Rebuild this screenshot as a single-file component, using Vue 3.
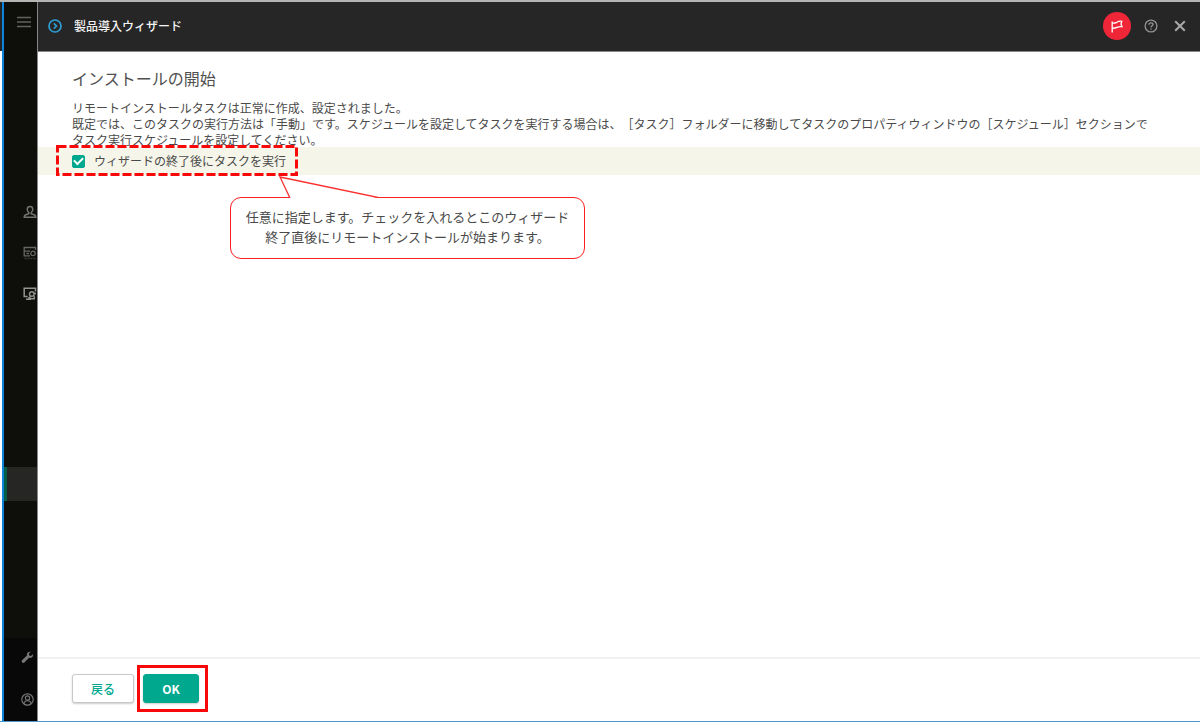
<script setup>
import { ref } from 'vue'

const runTask = ref(true)
</script>

<template>
  <div class="window">
    <nav class="sidebar" aria-label="メインメニュー">
      <button class="nav-btn menu" aria-label="メニュー">
        <svg width="16" height="12" viewBox="0 0 16 12"><path d="M1 1.500h14M1 6h14M1 10.500h14" stroke="#62625f" stroke-width="1.300" /></svg>
      </button>
      <div class="nav-group">
        <button class="nav-btn" aria-label="ユーザー">
          <svg width="14" height="14" viewBox="0 0 14 14" fill="none" stroke="#73736f" stroke-width="1.500"><path d="M7 1.500c-3.600 0-3.300 4.500-1.200 6.200v1L2.300 10Q1.200 10.600 1.200 12.300h11.600Q12.800 10.600 11.700 10L8.200 8.700v-1C10.300 6 10.600 1.500 7 1.500z" /></svg>
        </button>
        <button class="nav-btn" aria-label="サーバー">
          <svg width="14" height="14" viewBox="0 0 14 14" fill="none" stroke="#666662" stroke-width="1.300"><path d="M12.500 4V1.500H1.200v8.300H7M1.200 5.200h6M3.500 7.500h2.500" /><circle cx="10" cy="7.400" r="2.200" /><path d="M1.500 12.500h11" stroke-dasharray="2 1" opacity=".5" /></svg>
        </button>
        <button class="nav-btn" aria-label="デバイス">
          <svg width="14" height="14" viewBox="0 0 14 14" fill="none" stroke="#92928e" stroke-width="1.500"><path d="M12.500 4.500V1.300H1.200v8.100h3.500M3 12.300h5M6 10v2.300" /><circle cx="8.800" cy="7" r="2.300" /><path d="M7 9.200v2.600h4.300V9.200M11 6.500h2" /></svg>
        </button>
      </div>
      <div class="nav-current"></div>
      <div class="nav-bottom">
        <button class="nav-btn" aria-label="設定">
          <svg width="13" height="13" viewBox="0 0 13 13"><path d="M12 3.200 9.900 5 8.200 4.500 7.900 2.800 9.700.8C7.400.2 5.500 2 6 4.500L1 9.300c-1.200 1.400.9 3.600 2.400 2.300L8 6.800C10.600 7.500 12.600 5.500 12 3.200z" fill="#777" /></svg>
        </button>
        <button class="nav-btn" aria-label="アカウント">
          <svg width="13" height="13" viewBox="0 0 13 13" fill="none" stroke="#747474" stroke-width="1.200"><circle cx="6.500" cy="6.500" r="5.700" /><circle cx="6.500" cy="5" r="2.100" /><path d="M3.200 10.700V9.300Q4.500 7.600 6.500 7.600T9.800 9.300v1.400" /></svg>
        </button>
      </div>
    </nav>

    <div class="wizard">
      <header class="titlebar">
        <svg width="14" height="14" viewBox="0 0 14 14" fill="none" stroke="#2f9fd3" stroke-width="1.700"><circle cx="7" cy="7" r="6" /><path d="m5.800 4.300 2.700 2.700-2.700 2.700" /></svg>
        <h1>製品導入ウィザード</h1>
        <div class="actions">
          <button class="flag" aria-label="通知">
            <svg width="14" height="14" viewBox="0 0 14 14" fill="none" stroke="#fff" stroke-width="1.300"><path d="M2.200 13.500V2.500M2.200 4q2.300.4 4.600-.7 2.300-1.400 5-1l-.8 2.700 1 2.700q-2.700-.3-5 .7T2.200 9.200" /></svg>
          </button>
          <button class="help" aria-label="ヘルプ">
            <svg width="14" height="14" viewBox="0 0 14 14" fill="none" stroke="#949494" stroke-width="1.300"><circle cx="7" cy="7" r="5.900" /><path d="M5 5.700C5 3.100 9 3.300 9 5.500 9 6.900 7 6.800 7 8.500M7 9.500v1.300" /></svg>
          </button>
          <button class="close" aria-label="閉じる">
            <svg width="12" height="12" viewBox="0 0 12 12"><path d="m1.200 1.200 9.600 9.600m0-9.600-9.600 9.600" stroke="#a9a9a9" stroke-width="2" /></svg>
          </button>
        </div>
      </header>

      <main class="content">
        <h2>インストールの開始</h2>
        <p class="desc">リモートインストールタスクは正常に作成、設定されました。<br>既定では、このタスクの実行方法は「手動」です。スケジュールを設定してタスクを実行する場合は、［タスク］フォルダーに移動してタスクのプロパティウィンドウの［スケジュール］セクションでタスク実行スケジュールを設定してください。</p>
        <div class="option">
          <label>
            <input v-model="runTask" type="checkbox">
            <span>ウィザードの終了後にタスクを実行</span>
          </label>
          <svg class="mark" width="242" height="31" aria-hidden="true"><rect x="1.500" y="1.500" width="239" height="28" fill="none" stroke="#f80808" stroke-width="3" stroke-dasharray="9 3" /></svg>
          <div class="callout">
            <svg class="tail" width="102" height="22" viewBox="0 0 102 22" aria-hidden="true"><path d="M12 22 2 1l98 21z" fill="#fff" /><path d="M12 22 2 1l98 20.500" fill="none" stroke="#fb3030" stroke-width="1.300" /></svg>
            任意に指定します。チェックを入れるとこのウィザード<br>終了直後にリモートインストールが始まります。
          </div>
        </div>
      </main>

      <footer class="footer">
        <button class="btn">戻る</button>
        <div class="ok-mark"><button class="btn primary">OK</button></div>
      </footer>
    </div>
  </div>
</template>

<style>
body {
  background: #fff;
}
</style>

<style scoped>
* {
  box-sizing: border-box;
}
button {
  border: 0;
  padding: 0;
  background: none;
  font: inherit;
  cursor: pointer;
}
svg {
  display: block;
}
.window {
  display: flex;
  min-height: 100vh;
  padding-left: 2px;
  border-top: 2px solid #b5b5b5;
  border-bottom: 1px solid #4a96d2;
  background: linear-gradient(#252525 49px, #fff 49px);
  font-family: "Noto Sans CJK JP", sans-serif;
  font-size: 12px;
  color: #4a4a4a;
  text-spacing-trim: space-all;
}
.sidebar {
  width: 36px;
  flex: none;
  display: flex;
  flex-direction: column;
  border-left: 2px solid #0d83dc;
  border-right: 1px solid #888;
  background: #0e0e0b;
}
.nav-btn {
  display: flex;
}
.menu {
  margin: 14px 0 0 12px;
}
.nav-group {
  display: flex;
  flex-direction: column;
  gap: 27px;
  margin: 177px 0 0 19px;
}
.nav-current {
  height: 34px;
  margin-top: 166px;
  border-left: 3px solid #045d47;
  background: #262624;
}
.nav-bottom {
  display: flex;
  flex-direction: column;
  gap: 29px;
  margin-top: auto;
  padding: 13px 0 15px 17px;
  background: #080808;
}
.wizard {
  flex: 1;
  min-width: 0;
  display: flex;
  flex-direction: column;
}
.titlebar {
  height: 50px;
  display: flex;
  align-items: center;
  padding: 0 14px 2px 10px;
  border-bottom: 1px solid #888;
  background: #262626;
}
h1 {
  margin: 0 0 0 12px;
  font-size: 12px;
  line-height: 20px;
  font-weight: 500;
  color: #f4f4f4;
}
.actions {
  display: flex;
  align-items: center;
  margin-left: auto;
}
.flag {
  width: 28px;
  height: 28px;
  display: grid;
  place-items: center;
  border-radius: 50%;
  background: #ef2637;
}
.help {
  margin-left: 13px;
}
.close {
  margin-left: 16px;
}
.content {
  flex: 1;
  background: #fff;
}
h2 {
  margin: 14px 34px 0;
  font-size: 16px;
  line-height: 24px;
  font-weight: 400;
  color: #505050;
}
.desc {
  margin: 10px 44px 0 34px;
  line-height: 16px;
}
.option {
  position: relative;
  height: 28px;
  margin-top: -1px;
  padding-left: 34px;
  background: #f5f5e9;
}
label {
  display: inline-flex;
  align-items: center;
  height: 28px;
  gap: 9px;
  line-height: 16px;
}
input {
  appearance: none;
  width: 13px;
  height: 13px;
  margin: 0;
  display: grid;
  place-items: center;
  border: 1px solid #00a88e;
  border-radius: 2px;
  background: #fff;
}
input:checked {
  background: #00a88e;
}
input:checked::before {
  content: "";
  width: 7px;
  height: 4px;
  margin-bottom: 2px;
  border: solid #fff;
  border-width: 0 0 2px 2px;
  transform: rotate(-45deg);
}
.mark {
  position: absolute;
  left: 18px;
  top: -2px;
}
.callout {
  position: absolute;
  left: 192px;
  top: 50px;
  width: 355px;
  padding: 9px 0 11px;
  border: 1px solid #fb2020;
  border-radius: 11px;
  background: #fff;
  font-size: 13px;
  line-height: 20px;
  text-align: center;
  white-space: nowrap;
}
.tail {
  position: absolute;
  left: 47px;
  top: -22px;
}
.footer {
  display: flex;
  align-items: center;
  gap: 3px;
  height: 64px;
  padding: 0 34px 3px;
  border-top: 2px solid #f1f1f1;
  background: #fff;
}
.btn {
  height: 29px;
  width: 62px;
  border: 1px solid #c9c9c9;
  border-radius: 3px;
  background: #fff;
  box-shadow: 0 1px 2px #0003;
  color: #00a88e;
  font-weight: 500;
}
.ok-mark {
  padding: 6px;
  padding-left: 3px;
  border: 3px solid #f80808;
}
.primary {
  display: block;
  width: 56px;
  border-color: #00a88e;
  background: #00a88e;
  color: #fff;
  font-weight: 700;
}
</style>
